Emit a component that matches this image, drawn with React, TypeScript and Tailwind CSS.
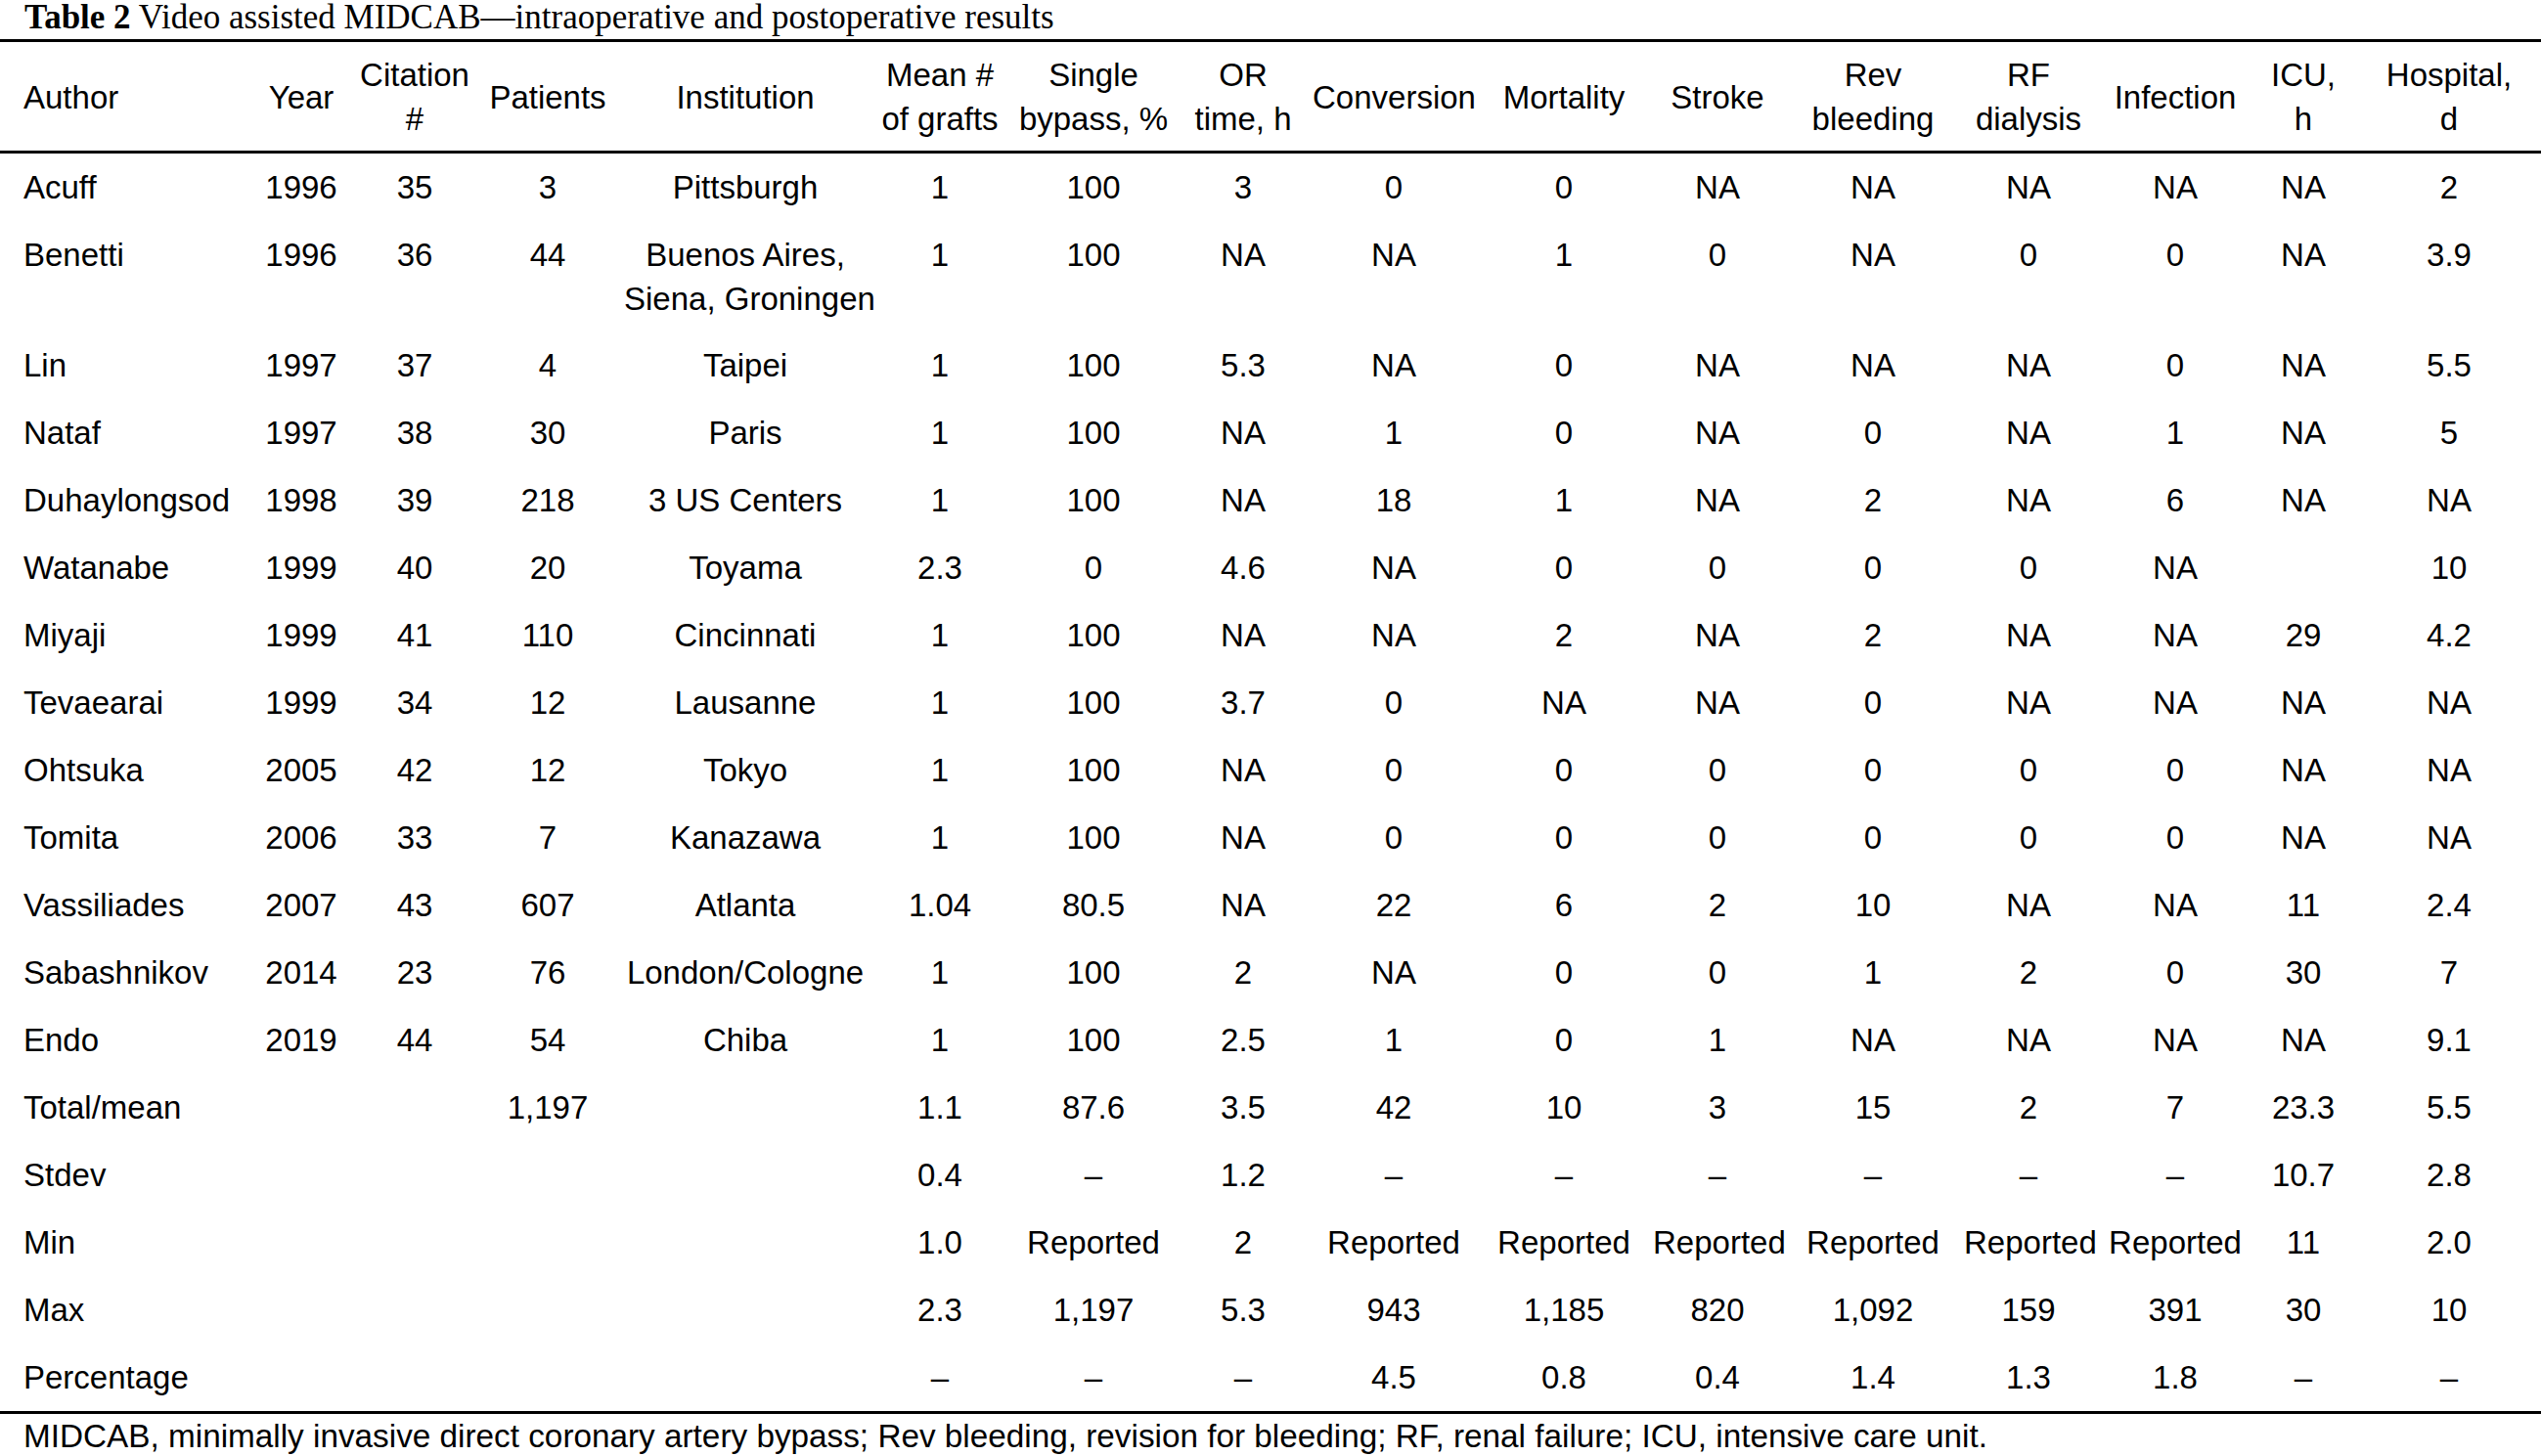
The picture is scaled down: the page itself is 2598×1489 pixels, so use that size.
type Row = {
  cells: string[];
};

const columns = [
  { label: ['Author'], width: 'w-[250px]' },
  { label: ['Year'], width: 'w-[116px]' },
  { label: ['Citation', '#'], width: 'w-[116px]' },
  { label: ['Patients'], width: 'w-[156px]' },
  { label: ['Institution'], width: 'w-[248px]' },
  { label: ['Mean #', 'of grafts'], width: 'w-[150px]' },
  { label: ['Single', 'bypass, %'], width: 'w-[164px]' },
  { label: ['OR', 'time, h'], width: 'w-[142px]' },
  { label: ['Conversion'], width: 'w-[166px]' },
  { label: ['Mortality'], width: 'w-[182px]' },
  { label: ['Stroke'], width: 'w-[132px]' },
  { label: ['Rev', 'bleeding'], width: 'w-[186px]' },
  { label: ['RF', 'dialysis'], width: 'w-[132px]' },
  { label: ['Infection'], width: 'w-[168px]' },
  { label: ['ICU,', 'h'], width: 'w-[94px]' },
  { label: ['Hospital,', 'd'], width: 'w-[196px]' },
];

const rows: Row[] = [
  { cells: ['Acuff', '1996', '35', '3', 'Pittsburgh', '1', '100', '3', '0', '0', 'NA', 'NA', 'NA', 'NA', 'NA', '2'] },
  { cells: ['Benetti', '1996', '36', '44', 'Buenos Aires,|Siena, Groningen', '1', '100', 'NA', 'NA', '1', '0', 'NA', '0', '0', 'NA', '3.9'] },
  { cells: ['Lin', '1997', '37', '4', 'Taipei', '1', '100', '5.3', 'NA', '0', 'NA', 'NA', 'NA', '0', 'NA', '5.5'] },
  { cells: ['Nataf', '1997', '38', '30', 'Paris', '1', '100', 'NA', '1', '0', 'NA', '0', 'NA', '1', 'NA', '5'] },
  { cells: ['Duhaylongsod', '1998', '39', '218', '3 US Centers', '1', '100', 'NA', '18', '1', 'NA', '2', 'NA', '6', 'NA', 'NA'] },
  { cells: ['Watanabe', '1999', '40', '20', 'Toyama', '2.3', '0', '4.6', 'NA', '0', '0', '0', '0', 'NA', '', '10'] },
  { cells: ['Miyaji', '1999', '41', '110', 'Cincinnati', '1', '100', 'NA', 'NA', '2', 'NA', '2', 'NA', 'NA', '29', '4.2'] },
  { cells: ['Tevaearai', '1999', '34', '12', 'Lausanne', '1', '100', '3.7', '0', 'NA', 'NA', '0', 'NA', 'NA', 'NA', 'NA'] },
  { cells: ['Ohtsuka', '2005', '42', '12', 'Tokyo', '1', '100', 'NA', '0', '0', '0', '0', '0', '0', 'NA', 'NA'] },
  { cells: ['Tomita', '2006', '33', '7', 'Kanazawa', '1', '100', 'NA', '0', '0', '0', '0', '0', '0', 'NA', 'NA'] },
  { cells: ['Vassiliades', '2007', '43', '607', 'Atlanta', '1.04', '80.5', 'NA', '22', '6', '2', '10', 'NA', 'NA', '11', '2.4'] },
  { cells: ['Sabashnikov', '2014', '23', '76', 'London/Cologne', '1', '100', '2', 'NA', '0', '0', '1', '2', '0', '30', '7'] },
  { cells: ['Endo', '2019', '44', '54', 'Chiba', '1', '100', '2.5', '1', '0', '1', 'NA', 'NA', 'NA', 'NA', '9.1'] },
  { cells: ['Total/mean', '', '', '1,197', '', '1.1', '87.6', '3.5', '42', '10', '3', '15', '2', '7', '23.3', '5.5'] },
  { cells: ['Stdev', '', '', '', '', '0.4', '–', '1.2', '–', '–', '–', '–', '–', '–', '10.7', '2.8'] },
  { cells: ['Min', '', '', '', '', '1.0', 'Reported', '2', 'Reported', 'Reported', 'Reported', 'Reported', 'Reported', 'Reported', '11', '2.0'] },
  { cells: ['Max', '', '', '', '', '2.3', '1,197', '5.3', '943', '1,185', '820', '1,092', '159', '391', '30', '10'] },
  { cells: ['Percentage', '', '', '', '', '–', '–', '–', '4.5', '0.8', '0.4', '1.4', '1.3', '1.8', '–', '–'] },
];

// first column is left aligned, last one sits a touch right of its cell centre
const cellAlign = (i: number) =>
  i === 0 ? 'text-left pl-[24px]' : i === columns.length - 1 ? 'text-center pl-[8px]' : 'text-center';

export default function App() {
  return (
    <div className="w-[2598px] bg-white text-black">
      {/* Caption */}
      <div className="pl-[25px] h-[40px] leading-[35px] text-[35px] font-['Liberation_Serif',serif] whitespace-nowrap">
        <span className="font-bold">Table 2</span> Video assisted MIDCAB—intraoperative and postoperative results
      </div>

      {/* Table */}
      <table className="table-fixed w-[2598px] border-collapse font-['Liberation_Sans',Arial,sans-serif] text-[33px] leading-[45px] border-t-[3px] border-b-[3px] border-black">
        <colgroup>
          {columns.map((c, i) => (
            <col key={i} className={c.width} />
          ))}
        </colgroup>
        <thead>
          <tr className="border-b-[3px] border-black">
            {columns.map((c, i) => (
              <th
                key={i}
                className={`font-normal align-middle whitespace-nowrap pt-[11px] pb-[10px] ${cellAlign(i)}`}
              >
                {c.label.map((line, j) => (
                  <div key={j}>{line}</div>
                ))}
              </th>
            ))}
          </tr>
        </thead>
        <tbody>
          {rows.map((row, r) => (
            <tr key={r}>
              {row.cells.map((cell, i) => (
                <td
                  key={i}
                  className={`align-top whitespace-nowrap ${r === 1 ? 'pt-3 pb-[11px]' : 'py-3'} ${cellAlign(i)}`}
                >
                  {cell.split('|').map((line, j) => (
                    <div key={j}>{line || '\u00a0'}</div>
                  ))}
                </td>
              ))}
            </tr>
          ))}
        </tbody>
      </table>

      {/* Footnote */}
      <div className="pl-[24px] pt-[3px] leading-[40px] text-[33.3px] font-['Liberation_Sans',Arial,sans-serif] whitespace-nowrap">
        MIDCAB, minimally invasive direct coronary artery bypass; Rev bleeding, revision for bleeding; RF, renal failure; ICU, intensive care unit.
      </div>
    </div>
  );
}
